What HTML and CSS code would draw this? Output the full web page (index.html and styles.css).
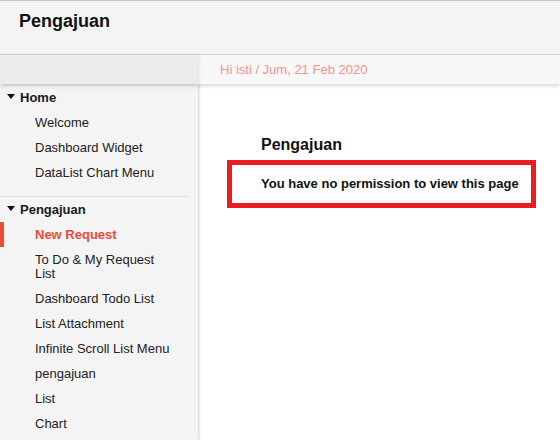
FILE: index.html
```html
<!DOCTYPE html>
<html>
<head>
<meta charset="utf-8">
<link rel="stylesheet" href="styles.css">
</head>
<body>
<header class="topbar">
  <h1 class="app-title">Pengajuan</h1>
</header>
<div class="subbar">
  <div class="subbar-side"></div>
  <div class="subbar-info">Hi isti / Jum, 21 Feb 2020</div>
</div>
<div class="layout">
  <nav class="sidebar">
    <div class="group">
      <div class="group-title"><span class="caret"></span>Home</div>
      <a class="item">Welcome</a>
      <a class="item">Dashboard Widget</a>
      <a class="item">DataList Chart Menu</a>
    </div>
    <div class="group group-last">
      <div class="group-title"><span class="caret"></span>Pengajuan</div>
      <a class="item active">New Request</a>
      <a class="item">To Do &amp; My Request List</a>
      <a class="item">Dashboard Todo List</a>
      <a class="item">List Attachment</a>
      <a class="item">Infinite Scroll List Menu</a>
      <a class="item">pengajuan</a>
      <a class="item">List</a>
      <a class="item">Chart</a>
    </div>
  </nav>
  <main class="content">
    <h2 class="page-title">Pengajuan</h2>
    <div class="notice">You have no permission to view this page</div>
  </main>
</div>
</body>
</html>
```

FILE: styles.css
```css
html, body {
  margin: 0;
  padding: 0;
  background: #ffffff;
  font-family: "Liberation Sans", Arial, sans-serif;
  color: #222;
  height: 100%;
  overflow: hidden;
}

.topbar {
  border-top: 1px solid #c4c4c4;
  border-bottom: 1px solid #dadada;
  background: #f4f4f4;
  box-sizing: border-box;
  height: 55px;
}

.app-title {
  margin: 0;
  padding: 10px 0 0 19px;
  font-size: 18px;
  line-height: 20px;
  font-weight: bold;
  color: #111;
}

.subbar {
  display: flex;
  height: 29px;
  position: relative;
  z-index: 2;
  box-shadow: 0 2px 4px rgba(0, 0, 0, 0.16);
  background: #f8f8f8;
}

.subbar-side {
  width: 198px;
  background: #ececec;
  box-shadow: 1px 0 3px rgba(0, 0, 0, 0.12);
}

.subbar-info {
  padding-left: 22px;
  font-size: 13px;
  line-height: 29px;
  color: #f0938b;
}

.layout {
  display: flex;
  height: calc(100% - 84px);
}

.sidebar {
  width: 198px;
  flex: none;
  padding-top: 1px;
  background: #f4f4f4;
  box-shadow: 1px 0 3px rgba(0, 0, 0, 0.2);
  position: relative;
  z-index: 1;
}

.group {
  padding-bottom: 11px;
  margin-right: 10px;
  border-bottom: 1px solid #e0e0e0;
}

.group-last {
  border-bottom: none;
}

.group-title {
  display: flex;
  align-items: center;
  height: 25px;
  font-size: 13px;
  font-weight: bold;
  color: #1a1a1a;
}

.caret {
  width: 0;
  height: 0;
  border-left: 4px solid transparent;
  border-right: 4px solid transparent;
  border-top: 5px solid #111;
  margin: 0 5px 2px 7px;
}

.item {
  display: block;
  padding: 5.5px 0 5.5px 35px;
  font-size: 13px;
  line-height: 14px;
  color: #222;
  width: 140px;
}

.item.active {
  color: #e74c3c;
  font-weight: bold;
  box-shadow: inset 4px 0 0 #e74c3c;
}

.content {
  flex: 1;
  padding: 51px 0 0 29px;
}

.page-title {
  margin: 0 0 6px 34px;
  font-size: 16px;
  line-height: 19px;
  font-weight: bold;
  color: #111;
}

.notice {
  width: 270px;
  border: 5px solid #ed1c24;
  padding: 0 0 0 29px;
  height: 38px;
  line-height: 38px;
  font-size: 13px;
  font-weight: bold;
  color: #111;
}
```
